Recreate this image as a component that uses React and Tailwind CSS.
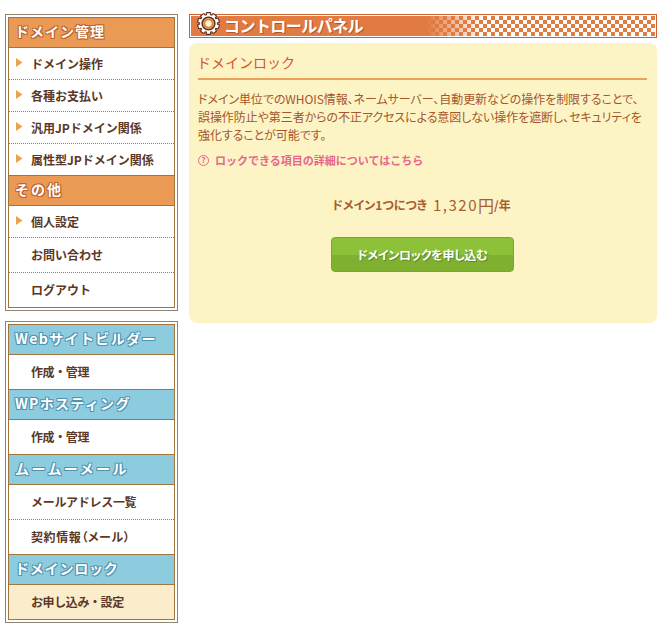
const FONT = '"Noto Sans CJK JP", "Liberation Sans", sans-serif';

function Arrow() {
  return (
    <svg width="7" height="10" viewBox="0 0 7 10" className="absolute left-[7px] top-[10px]">
      <path d="M0 0 L6.5 4.5 L0 9 Z" fill="#eba34f" />
    </svg>
  );
}

function Item({ label, arrow, h, border, active, track = 'tracking-[0px]' }) {
  const borderClass =
    border === 'dotted'
      ? 'border-b border-dotted border-[#8a7a66]'
      : border === 'solid'
      ? 'border-b border-[#a0763c]'
      : '';
  return (
    <div
      className={`relative flex items-center pl-[22px] text-[12px] font-bold text-[#5b3826] ${h} ${arrow ? 'pt-[1px]' : 'pb-[1px]'} ${borderClass} ${
        active ? 'bg-[#fbeccb]' : 'bg-white'
      }`}
    >
      {arrow && <Arrow />}
      <span className={`leading-none ${track}`}>{label}</span>
    </div>
  );
}

function Head({ label, blue, track = 'tracking-[1px]' }) {
  return (
    <div
      className={`flex h-[30px] items-center border-b border-[#a0763c] pb-[3px] pl-[6px] text-[14px] font-bold text-white ${
        blue
          ? 'bg-[#8dcbdf] [text-shadow:1px_1px_0_#4f93b0,-1px_-1px_0_#4f93b0,1px_-1px_0_#4f93b0,-1px_1px_0_#4f93b0]'
          : 'bg-[#ea9a54] [text-shadow:1px_1px_0_#bd5f2c,-1px_-1px_0_#bd5f2c,1px_-1px_0_#bd5f2c,-1px_1px_0_#bd5f2c]'
      }`}
    >
      <span className={`leading-none ${track}`}>{label}</span>
    </div>
  );
}

function Box({ children, className = '' }) {
  return (
    <div className={`border border-[#8f8570] bg-white p-[2px] ${className}`}>
      <div className="border border-[#a0763c]">{children}</div>
    </div>
  );
}

function Gear() {
  const teeth = [];
  for (let i = 0; i < 10; i++) {
    teeth.push(
      <rect key={i} x="9.3" y="0.6" width="4.4" height="6" rx="0.8" fill="#fff" stroke="#5b2a1a" strokeWidth="1.1" transform={`rotate(${i * 36} 11.5 11.5)`} />
    );
  }
  return (
    <svg width="23" height="23" viewBox="0 0 23 23" className="absolute left-[7px] top-[-3px]">
      {teeth}
      <circle cx="11.5" cy="11.5" r="8.4" fill="#fff" />
      <circle cx="11.5" cy="11.5" r="6.4" fill="#e9954f" stroke="#5b2a1a" strokeWidth="1.4" />
      <circle cx="11.5" cy="11.5" r="3.8" fill="#fdf4c6" stroke="#8a4a25" strokeWidth="0.6" />
    </svg>
  );
}

export default function App() {
  return (
    <div className="flex h-[625px] w-[669px] bg-white pl-[5px] pt-[14px]" style={{ fontFamily: FONT }}>
      <div className="flex w-[173px] shrink-0 flex-col">
        <Box>
          <Head label="ドメイン管理" />
          <Item label="ドメイン操作" arrow h="h-[32px]" border="dotted" />
          <Item label="各種お支払い" arrow h="h-[32px]" border="dotted" />
          <Item label="汎用JPドメイン関係" arrow h="h-[32px]" border="dotted" />
          <Item label="属性型JPドメイン関係" arrow h="h-[32px]" border="solid" />
          <Head label="その他" track="tracking-[2px]" />
          <Item label="個人設定" arrow h="h-[32px]" border="dotted" />
          <Item label="お問い合わせ" h="h-[35px]" border="dotted" />
          <Item label="ログアウト" h="h-[34px]" />
        </Box>
        <Box className="mt-[10px]">
          <Head label="Webサイトビルダー" blue track="tracking-[1.4px]" />
          <Item label="作成・管理" h="h-[35px]" border="solid" track="tracking-[-0.4px]" />
          <Head label="WPホスティング" blue track="tracking-[1.3px]" />
          <Item label="作成・管理" h="h-[35px]" border="solid" track="tracking-[-0.4px]" />
          <Head label="ムームーメール" blue track="tracking-[2.4px]" />
          <Item label="メールアドレス一覧" h="h-[35px]" border="dotted" track="tracking-[-0.3px]" />
          <Item label="契約情報（メール）" h="h-[35px]" border="solid" track="tracking-[0.6px] [font-feature-settings:'palt']" />
          <Head label="ドメインロック" blue track="tracking-[0.8px]" />
          <Item label="お申し込み・設定" h="h-[34px]" active track="tracking-[-0.4px]" />
        </Box>
      </div>

      <div className="ml-[11px] flex w-[468px] shrink-0 flex-col">
        <div className="relative h-[24px] border border-[#cd6133] bg-white p-[1px]">
          <div className="flex h-full items-center bg-[linear-gradient(90deg,#e27b41_0,#e27b41_236px,rgba(226,123,65,0)_292px),repeating-conic-gradient(#e27b41_0_25%,#ffffff_0_50%)] bg-[size:100%_100%,8px_8px] pb-[3px] pl-[33px] text-[16px] font-bold text-white [text-shadow:1px_1px_0_#b9552a]">
            <span className="leading-none tracking-[-0.55px]">コントロールパネル</span>
          </div>
          <Gear />
        </div>

        <div className="mt-[5px] h-[280px] rounded-[8px] bg-[#fdf4c6] pl-[9px] pr-[10px] pt-[10px]">
          <div className="flex h-[27px] items-center border-b-2 border-[#eea15a] pb-[8px] text-[14px] text-[#d8542c]">
            <span className="-ml-[1px] leading-none">ドメインロック</span>
          </div>
          <p className="mt-[10px] whitespace-nowrap text-[12px] leading-[18px] tracking-[-0.07px] text-[#a5562a] [font-feature-settings:'palt']">
            ドメイン単位でのWHOIS情報、ネームサーバー、自動更新などの操作を制限することで、<br />
            誤操作防止や第三者からの不正アクセスによる意図しない操作を遮断し、セキュリティを<br />
            強化することが可能です。
          </p>
          <div className="mt-[7px] flex h-[18px] items-center text-[11px] font-bold text-[#e8668a]">
            <span className="flex h-[11px] w-[11px] items-center justify-center rounded-full border border-[#e8668a] text-[8px] leading-none">?</span>
            <span className="ml-[6px] leading-none">ロックできる項目の詳細についてはこちら</span>
          </div>
          <div className="mt-[24px] flex h-[24px] items-center justify-center pr-[2px] text-[#a85c30]">
            <span className="text-[12px] font-bold [font-feature-settings:'palt']">ドメイン1つにつき</span>
            <span className="ml-[6px] text-[15px] tracking-[1.5px]">1,320</span>
            <span className="text-[16px]">円</span>
            <span className="text-[12px] font-bold">/年</span>
          </div>
          <div className="mt-[20px] flex justify-center">
            <div className="flex h-[35px] w-[183px] items-center justify-center rounded-[4px] border border-[#76a62d] bg-[linear-gradient(#8dc139_0,#8dc139_50%,#7fb030_50%,#7fb030_100%)] text-[12px] font-bold tracking-[-0.3px] text-white [font-feature-settings:'palt'] [text-shadow:1px_1px_0_#5f8a22]">
              ドメインロックを申し込む
            </div>
          </div>
        </div>
      </div>
    </div>
  );
}
